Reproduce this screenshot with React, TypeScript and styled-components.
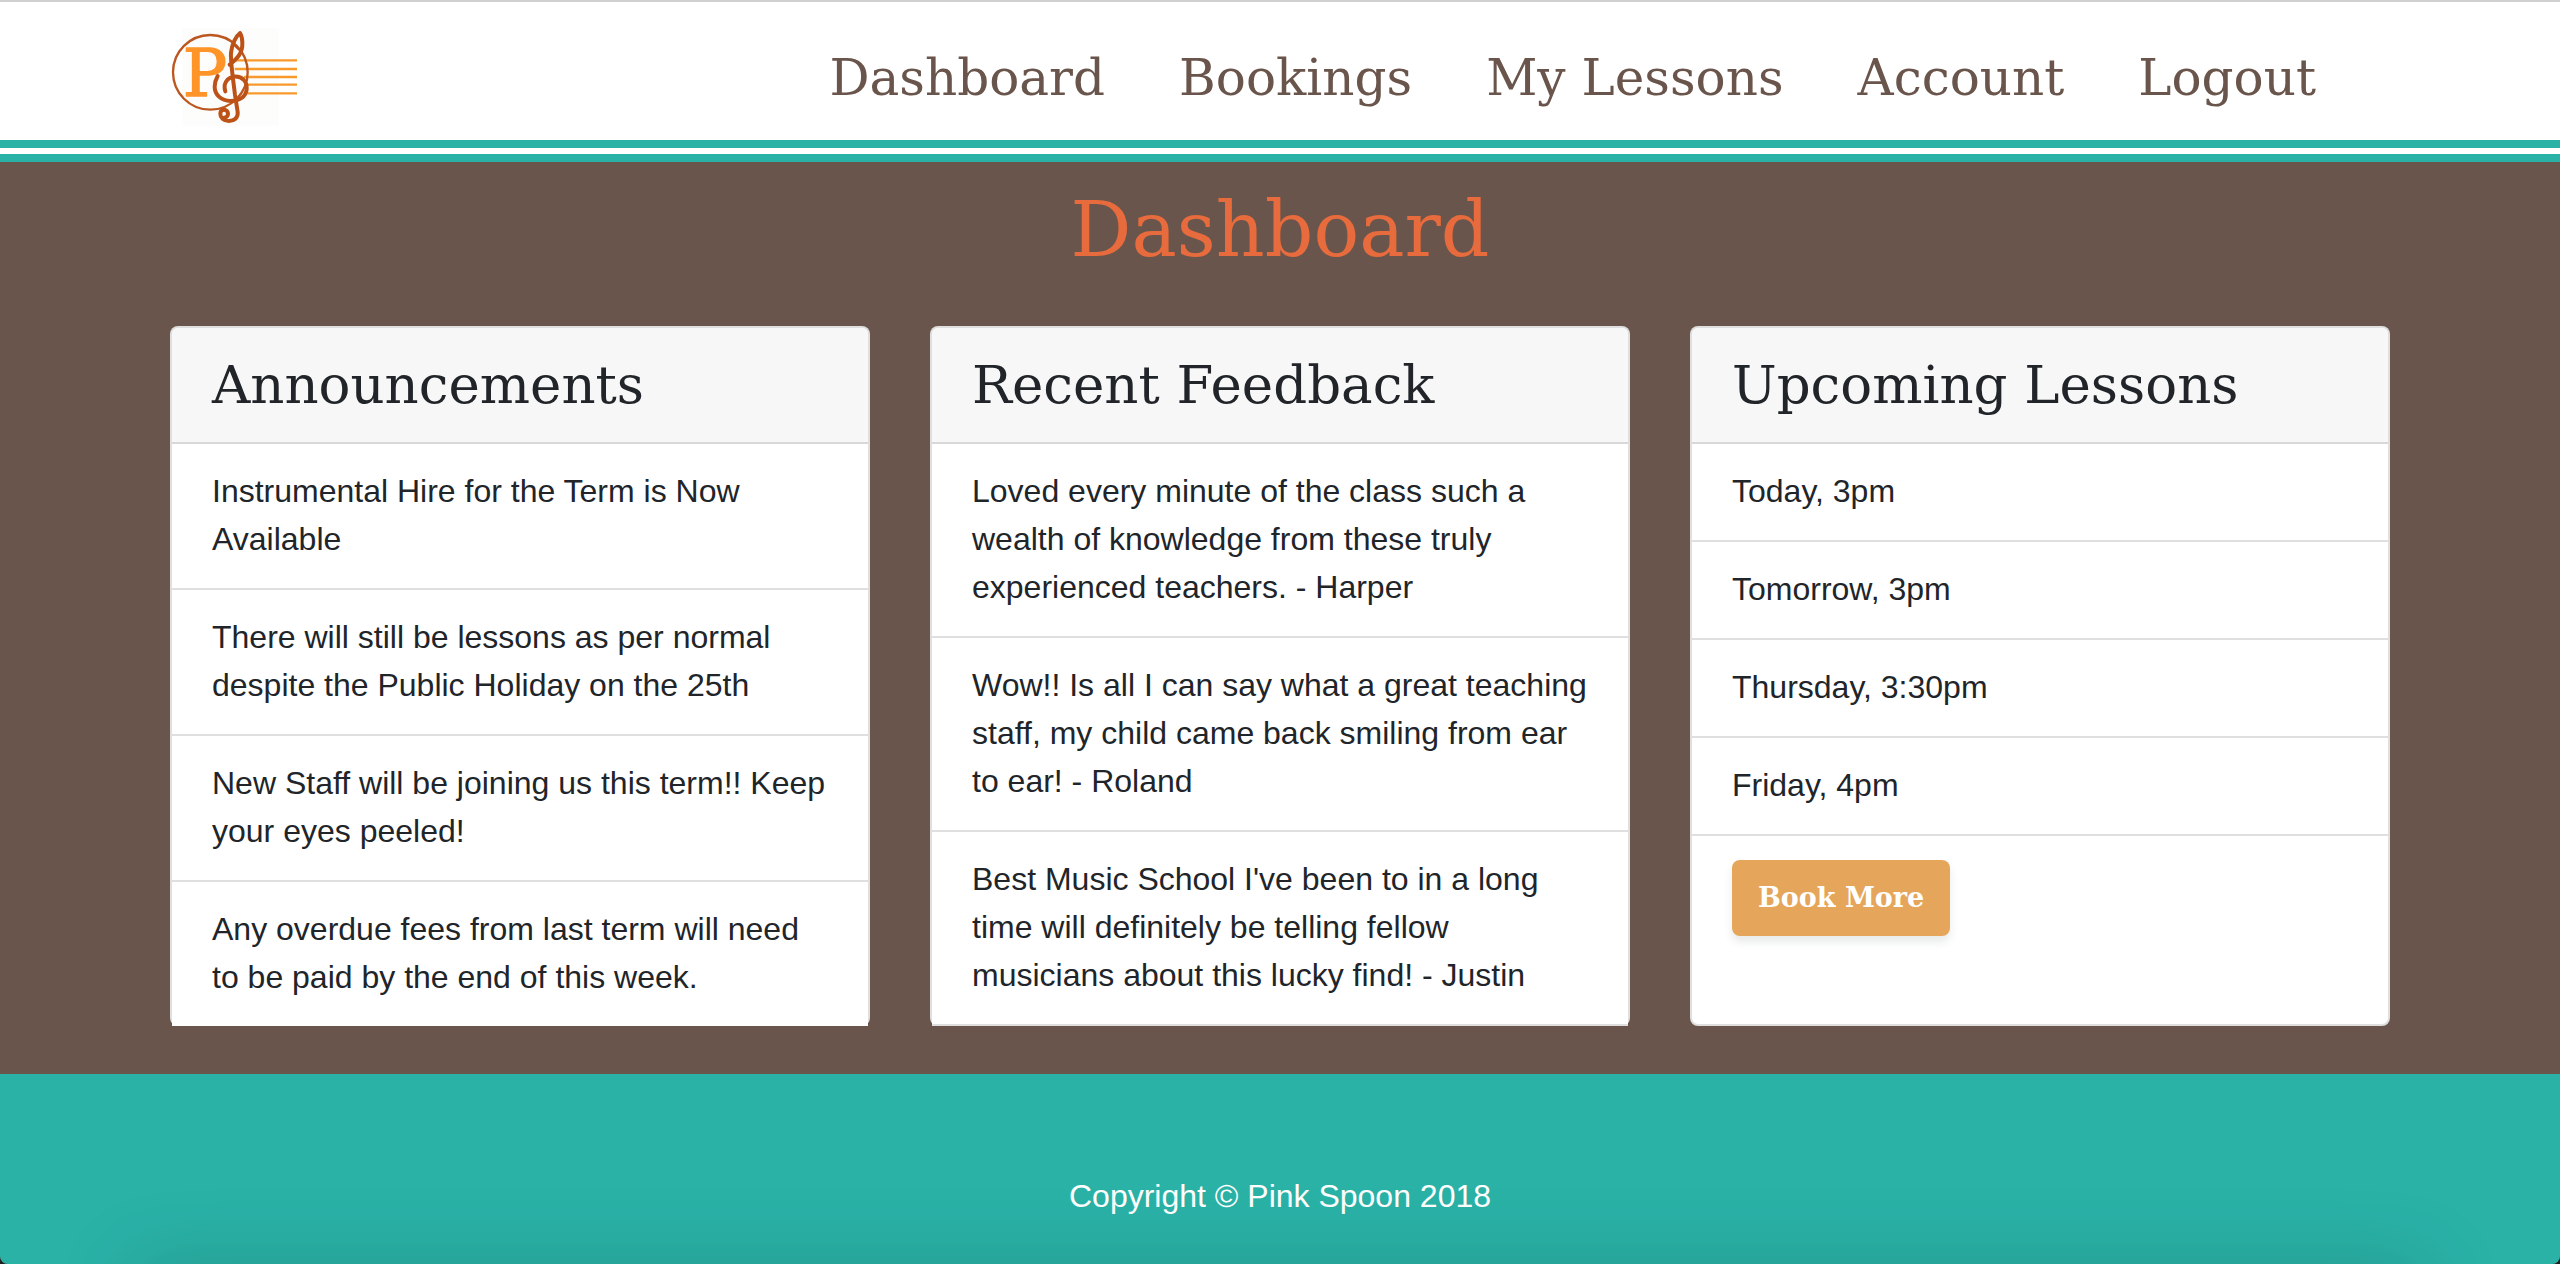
import React from "react";
import styled, { createGlobalStyle } from "styled-components";

const slab = `"American Typewriter", "DejaVu Serif", serif`;
const sans = `"Liberation Sans", Arial, sans-serif`;
const teal = "#2ab2a7";
const brown = "#69554b";
const line = "rgba(0, 0, 0, 0.125)";

const GlobalStyle = createGlobalStyle`
  *, *::before, *::after { box-sizing: border-box; }
  body {
    margin: 0;
    background: #222;
    color: #212529;
    font-family: ${sans};
    font-size: 32px;
    line-height: 48px;
  }
`;

const Page = styled.div`
  overflow: hidden;
  border-radius: 0 0 8px 8px;
  background: ${brown};
`;

const Container = styled.div`
  width: calc(100% - 80px);
  max-width: 2220px;
  margin: 0 auto;
`;

const Header = styled.header`
  background: #fff;
  border-top: 2px solid #d0d0d0;

  &::after {
    content: "";
    display: block;
    height: 22px;
    border: solid ${teal};
    border-width: 8px 0;
  }
`;

const HeaderInner = styled(Container)`
  display: flex;
  align-items: center;
  justify-content: space-between;
  padding: 26px 74px 14px 0;
`;

const LogoLink = styled.a`
  display: block;
  line-height: 0;
`;

const Nav = styled.nav`
  display: flex;
  gap: 74px;
`;

const NavLink = styled.a`
  padding-top: 2px;
  color: ${brown};
  font-family: ${slab};
  font-size: 50px;
  line-height: 60px;
  text-decoration: none;
  white-space: nowrap;
`;

const Main = styled.main`
  padding: 20px 0 48px;
`;

const Title = styled.h1`
  margin: 0 0 48px;
  color: #e76b3c;
  font-family: ${slab};
  font-size: 76px;
  font-weight: 400;
  line-height: 96px;
  text-align: center;
`;

const Cards = styled(Container)`
  display: grid;
  grid-template-columns: repeat(3, minmax(0, 1fr));
  gap: 60px;
`;

const Card = styled.section`
  background: #fff;
  border: 2px solid ${line};
  border-radius: 8px;
`;

const CardTitle = styled.h2`
  margin: 0;
  padding: 24px 40px;
  background: #f7f7f7;
  border-bottom: 2px solid ${line};
  border-radius: 6px 6px 0 0;
  font-family: ${slab};
  font-size: 53px;
  font-weight: 400;
  line-height: 66px;
`;

const List = styled.ul<{ $openEnd?: boolean }>`
  position: relative;
  list-style: none;
  margin: 0 0 -2px;
  padding: 0;

  li:last-child {
    border-bottom-width: ${(p) => (p.$openEnd ? "0" : "2px")};
  }
`;

const Item = styled.li`
  padding: 23px 40px 25px;
  background: #fff;
  border-bottom: 2px solid #dfdfdf;
`;

const CardAction = styled.div`
  padding: 26px 40px;
`;

const Button = styled.button`
  height: 76px;
  padding: 0 26px;
  border: 0;
  border-radius: 8px;
  background: #e5a65c;
  box-shadow: 0 6px 8px rgba(30, 60, 50, 0.1);
  color: #fff;
  font-family: ${slab};
  font-size: 27px;
  font-weight: 700;
  line-height: 48px;
  cursor: pointer;
`;

const Footer = styled.footer`
  position: relative;
  overflow: hidden;
  padding: 98px 0 44px;
  background: ${teal};
  color: #fff;
  text-align: center;

  &::after {
    content: "";
    position: absolute;
    top: 100%;
    left: 130px;
    right: 130px;
    height: 80px;
    box-shadow: 0 0 80px rgba(0, 0, 0, 0.15);
  }
`;

const FooterText = styled.p`
  margin: 0;
`;

const Logo = () => (
  <svg width="128" height="98" viewBox="60 56 384 294" role="img" aria-label="Pink Spoon">
    <defs>
      <pattern id="hatch" width="8" height="8" patternUnits="userSpaceOnUse">
        <path d="M0 0L8 8" stroke="#f6f4f2" strokeWidth="2" />
      </pattern>
    </defs>
    <rect x="97" y="57" width="290" height="292" fill="url(#hatch)" />
    <g stroke="#f79a2b" strokeWidth="7">
      <path d="M258 153H441M254 179H441M282 203H441M292 226H441M292 252H441" />
    </g>
    <circle cx="181" cy="189" r="112" fill="none" stroke="#bc5720" strokeWidth="7" />
    <text
      x="98"
      y="261"
      fontFamily="DejaVu Serif, serif"
      fontSize="198"
      fill="#ff9428"
      stroke="#ff9428"
      strokeWidth="4"
      strokeLinejoin="round"
    >
      P
    </text>
    <g fill="none" stroke="#bc5218" strokeWidth="12" strokeLinecap="round" strokeLinejoin="round">
      <path d="M250 105L267 121" strokeWidth="6" />
      <path d="M226 246C219 226 229 205 252 202C278 200 292 218 290 240C288 262 268 275 242 275C212 274 194 255 194 232C194 220 198 209 203 200M239 166C262 147 278 132 277 101C277 86 273 76 270 71C258 80 246 104 243 130C241 158 250 213 255 257L263 308C265 326 252 335 237 335C220 335 211 325 211 313C211 304 216 301 222 301C229 301 234 307 234 313C234 320 229 325 222 325" />
    </g>
  </svg>
);

const links = ["Dashboard", "Bookings", "My Lessons", "Account", "Logout"];

const announcements = [
  "Instrumental Hire for the Term is Now Available",
  "There will still be lessons as per normal despite the Public Holiday on the 25th",
  "New Staff will be joining us this term!! Keep your eyes peeled!",
  "Any overdue fees from last term will need to be paid by the end of this week.",
];

const feedback = [
  "Loved every minute of the class such a wealth of knowledge from these truly experienced teachers. - Harper",
  "Wow!! Is all I can say what a great teaching staff, my child came back smiling from ear to ear! - Roland",
  "Best Music School I've been to in a long time will definitely be telling fellow musicians about this lucky find! - Justin",
];

const lessons = ["Today, 3pm", "Tomorrow, 3pm", "Thursday, 3:30pm", "Friday, 4pm"];

const renderItems = (items: string[]) => items.map((text) => <Item key={text}>{text}</Item>);

export default function App() {
  return (
    <Page>
      <GlobalStyle />
      <Header>
        <HeaderInner>
          <LogoLink href="#">
            <Logo />
          </LogoLink>
          <Nav>
            {links.map((label) => (
              <NavLink key={label} href="#">
                {label}
              </NavLink>
            ))}
          </Nav>
        </HeaderInner>
      </Header>
      <Main>
        <Title>Dashboard</Title>
        <Cards>
          <Card>
            <CardTitle>Announcements</CardTitle>
            <List $openEnd>{renderItems(announcements)}</List>
          </Card>
          <Card>
            <CardTitle>Recent Feedback</CardTitle>
            <List>{renderItems(feedback)}</List>
          </Card>
          <Card>
            <CardTitle>Upcoming Lessons</CardTitle>
            <List>{renderItems(lessons)}</List>
            <CardAction>
              <Button type="button">Book More</Button>
            </CardAction>
          </Card>
        </Cards>
      </Main>
      <Footer>
        <FooterText>Copyright © Pink Spoon 2018</FooterText>
      </Footer>
    </Page>
  );
}
